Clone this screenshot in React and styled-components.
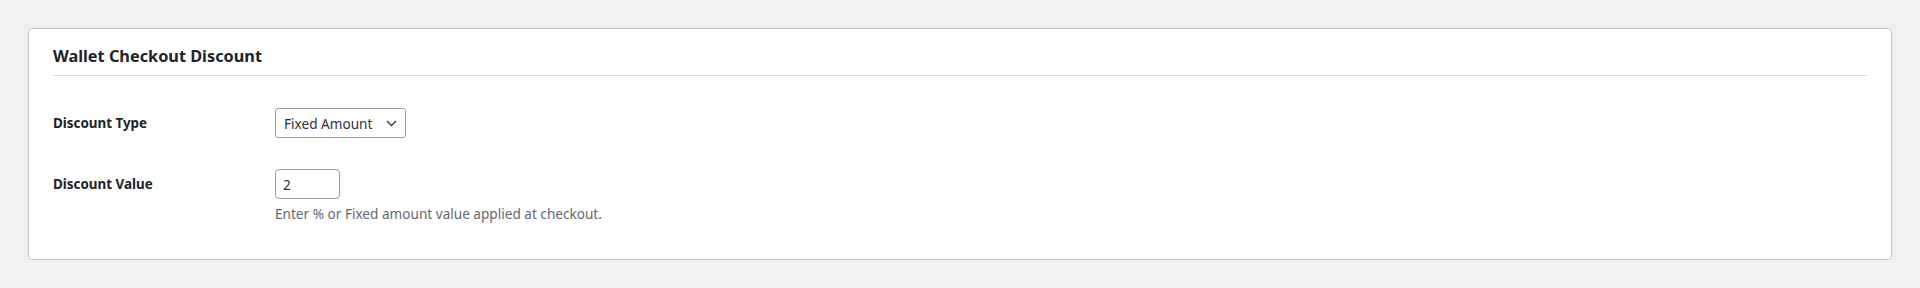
import React, { useState } from "react";
import styled, { createGlobalStyle } from "styled-components";

const GlobalStyle = createGlobalStyle`
  html, body {
    margin: 0;
    padding: 0;
    background: #f4f5f6;
  }
  body {
    font-family: "Noto Sans", "Open Sans", sans-serif;
    color: #1d2327;
  }
`;

const Page = styled.div`
  padding: 24px;
`;

const Halo = styled.div`
  background: #eeefef;
  padding: 4px 4px 3px 4px;
`;

const Card = styled.div`
  background: #fff;
  border: 1px solid #c6c7c9;
  border-radius: 4px;
  padding: 0 24px;
  height: 232px;
  box-sizing: border-box;
`;

const Title = styled.h2`
  margin: 0;
  padding: 16px 0 7px;
  font-size: 16.3px;
  font-weight: 700;
  line-height: 23px;
  color: #1d2327;
  border-bottom: 1px solid #dcdcde;
`;

const Rows = styled.div`
  display: flex;
  flex-direction: column;
  gap: 31px;
  padding-top: 32px;
`;

const Row = styled.div`
  display: grid;
  grid-template-columns: 222px 1fr;
  align-items: start;
`;

const Label = styled.label`
  font-size: 13.4px;
  font-weight: 700;
  line-height: 30px;
  color: #1d2327;
`;

const Field = styled.div`
  display: flex;
  flex-direction: column;
  align-items: flex-start;
  gap: 5px;
`;

const SelectBox = styled.div`
  position: relative;
  display: inline-flex;
  align-items: center;
  width: 131px;
  height: 30px;
  box-sizing: border-box;
  border: 1px solid #9a9da1;
  border-radius: 3px;
  padding: 0 0 0 8px;
  font-size: 13.6px;
  color: #2c3338;
  background: #fff;
`;

const Chevron = styled.svg`
  position: absolute;
  right: 8px;
  top: 50%;
  transform: translateY(-50%);
`;

const Input = styled.input`
  width: 65px;
  height: 30px;
  box-sizing: border-box;
  border: 1px solid #9a9da1;
  border-radius: 4px;
  padding: 0 7px;
  font-family: inherit;
  font-size: 13.6px;
  color: #2c3338;
  background: #fff;
  outline: none;
`;

const Hint = styled.p`
  margin: 0;
  font-size: 13.6px;
  line-height: 20px;
  color: #646970;
`;

export default function App() {
  const [value, setValue] = useState("2");
  return (
    <>
      <GlobalStyle />
      <Page>
        <Halo>
          <Card>
            <Title>Wallet Checkout Discount</Title>
            <Rows>
              <Row>
                <Label>Discount Type</Label>
                <Field>
                  <SelectBox>
                    Fixed Amount
                    <Chevron width="11" height="11" viewBox="0 0 11 11" fill="none">
                      <path d="M1 3.5l4.5 4.5 4.5-4.5" stroke="#2c3338" strokeWidth="1.3" />
                    </Chevron>
                  </SelectBox>
                </Field>
              </Row>
              <Row>
                <Label>Discount Value</Label>
                <Field>
                  <Input value={value} onChange={(e) => setValue(e.target.value)} />
                  <Hint>Enter % or Fixed amount value applied at checkout.</Hint>
                </Field>
              </Row>
            </Rows>
          </Card>
        </Halo>
      </Page>
    </>
  );
}
